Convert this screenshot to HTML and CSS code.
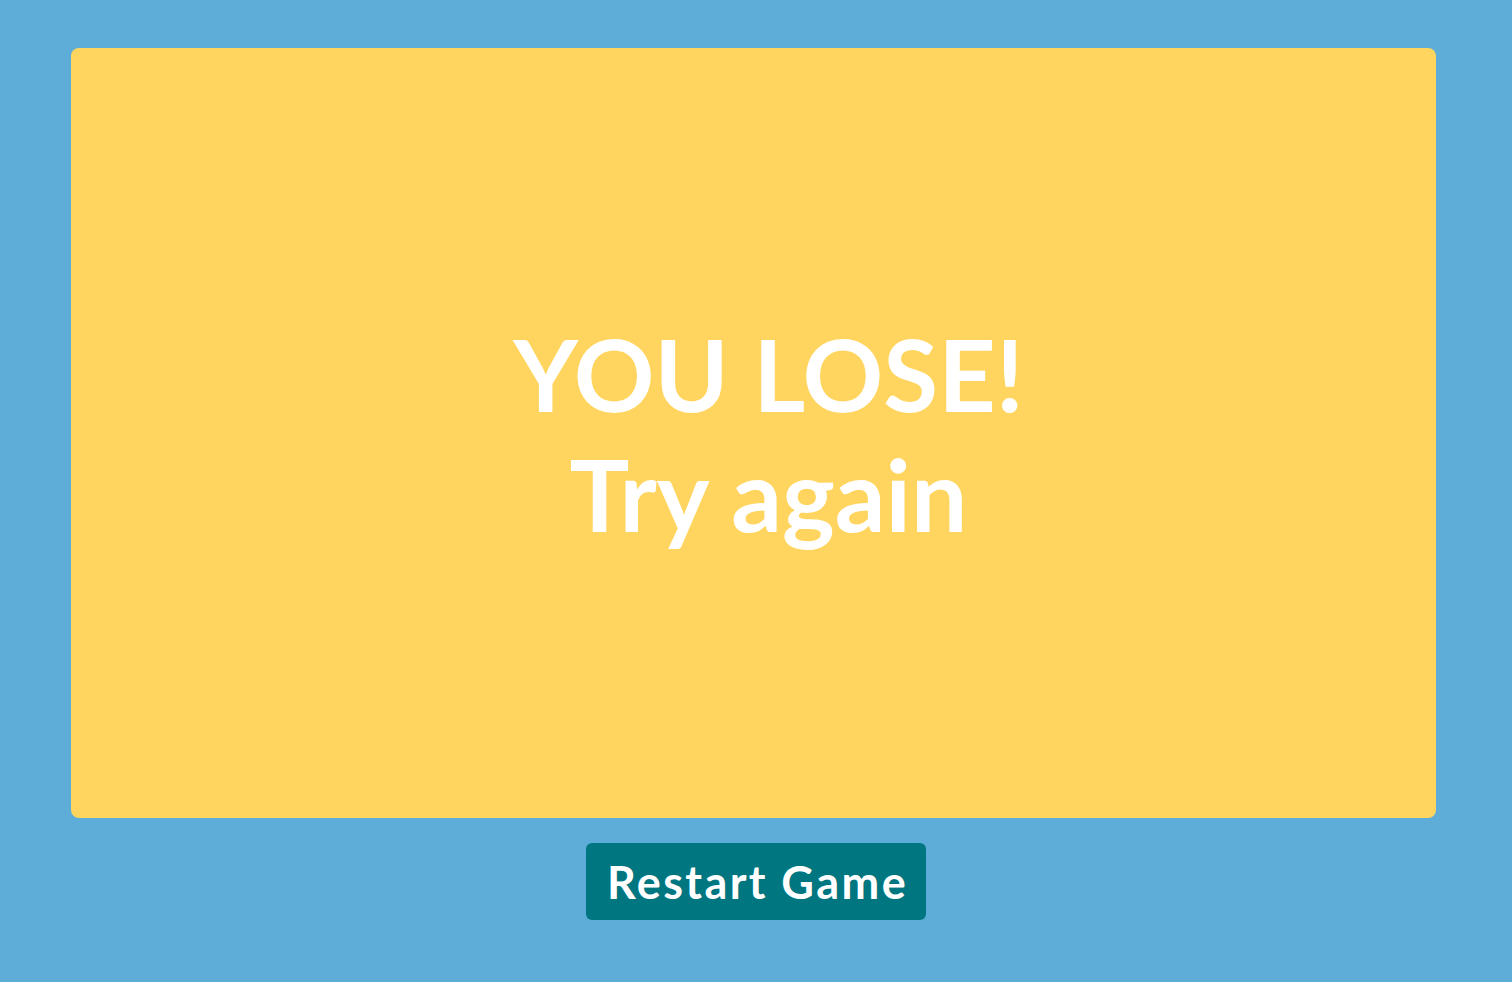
FILE: index.html
```html
<!DOCTYPE html>
<html>
<head>
<meta charset="utf-8">
<link rel="stylesheet" href="styles.css">
</head>
<body>
<main class="game">
  <section class="board">
    <h1 class="message">YOU LOSE!<br>Try again</h1>
  </section>
  <button class="restart">Restart Game</button>
</main>
</body>
</html>
```
FILE: styles.css
```css
html, body {
  margin: 0;
  padding: 0;
  background: #5dadd8;
  font-family: Lato, "Open Sans", sans-serif;
}
.game {
  display: flex;
  flex-direction: column;
  align-items: center;
  padding-top: 48px;
}
.board {
  box-sizing: border-box;
  width: 1365px;
  height: 770px;
  margin-left: -5px;
  background: #ffd55f;
  border-radius: 8px;
  display: flex;
  align-items: center;
  justify-content: center;
  padding-left: 30px;
}
.message {
  margin: 0;
  color: #fff;
  font-weight: 700;
  font-size: 100px;
  line-height: 1.2;
  text-align: center;
}
.restart {
  margin-top: 25px;
  box-sizing: border-box;
  width: 340px;
  height: 77px;
  background: #007681;
  color: #fff;
  border: none;
  border-radius: 6px;
  font-family: Lato, sans-serif;
  font-weight: 700;
  font-size: 45px;
  letter-spacing: 2.4px;
  padding: 0 0 0 3px;
}
```
